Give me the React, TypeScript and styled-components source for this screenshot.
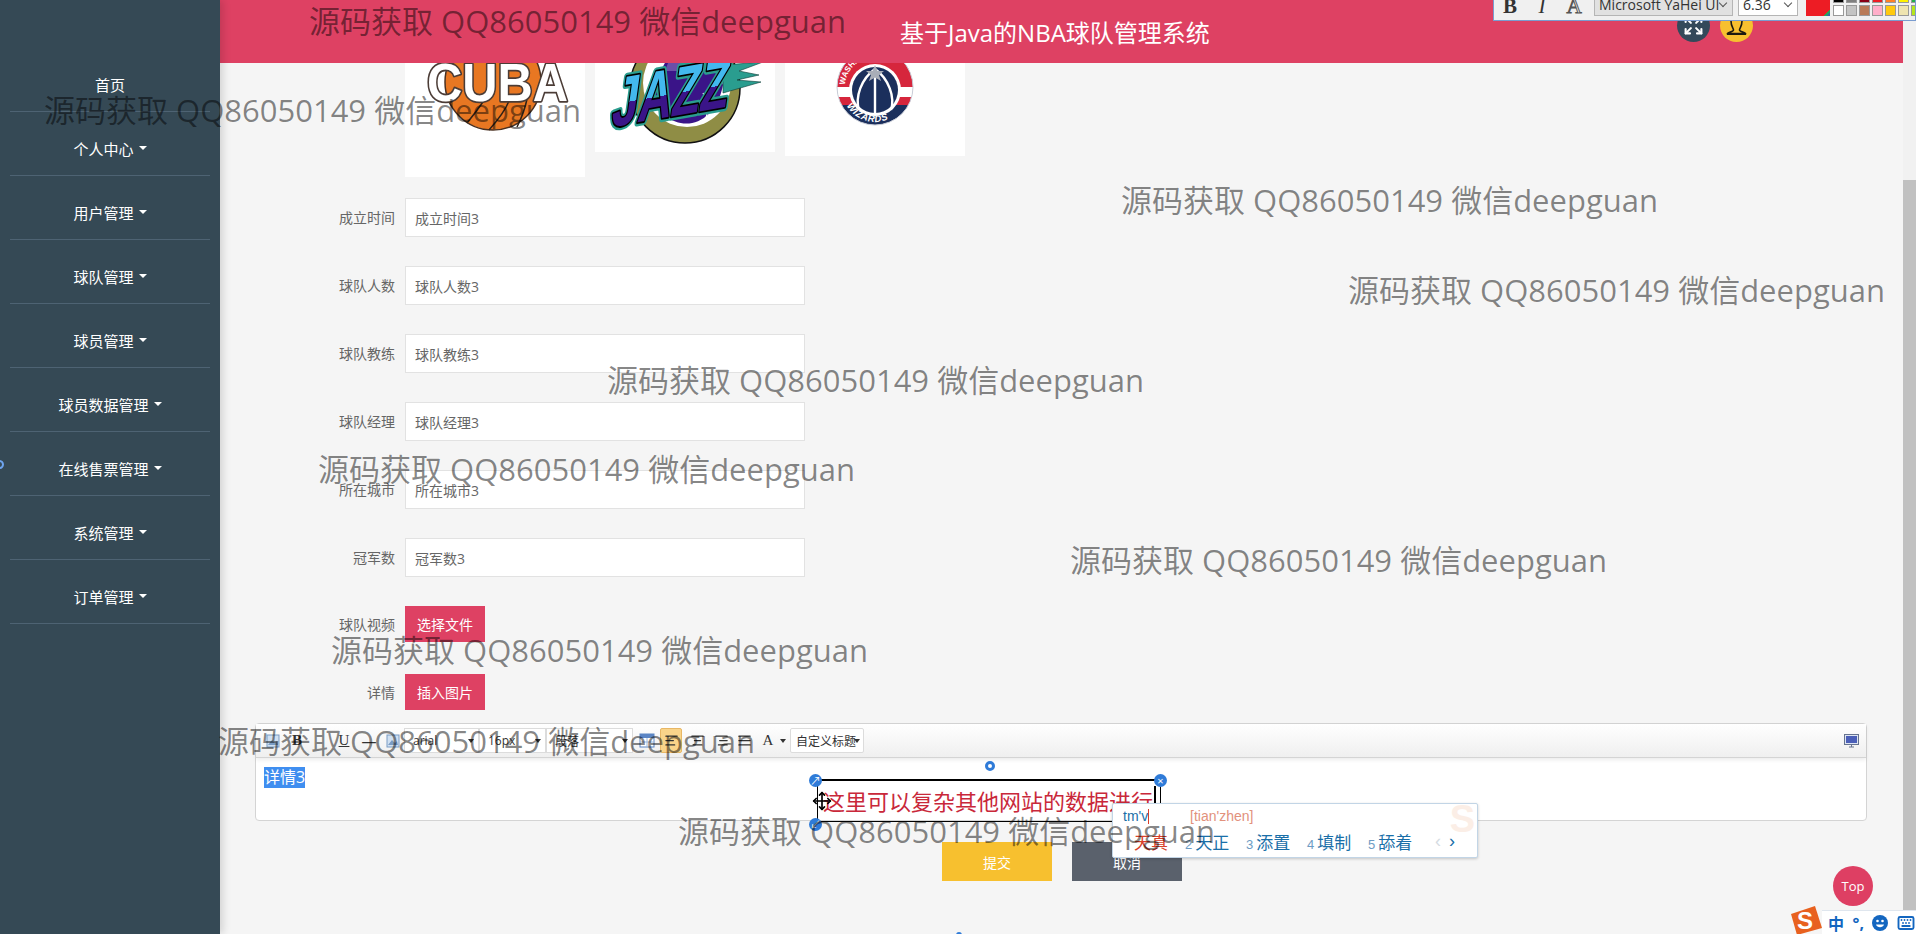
import styled, { createGlobalStyle } from "styled-components"
import { AlignCenter, AlignJustify, AlignLeft, AlignRight, Expand, Keyboard, Move } from "lucide-react"

const menuItems = ["个人中心", "用户管理", "球队管理", "球员管理", "球员数据管理", "在线售票管理", "系统管理", "订单管理"]
const fields = [
    { label: "成立时间", value: "成立时间3" },
    { label: "球队人数", value: "球队人数3" },
    { label: "球队教练", value: "球队教练3" },
    { label: "球队经理", value: "球队经理3" },
    { label: "所在城市", value: "所在城市3" },
    { label: "冠军数", value: "冠军数3" },
]
const watermarks = [
    [309, 21], [44, 110], [1121, 200], [1348, 290], [607, 380],
    [318, 469], [1070, 560], [331, 650], [218, 741], [678, 831],
]
const candidates = [
    { num: "2", word: "天正", width: 61 },
    { num: "3", word: "添置", width: 61 },
    { num: "4", word: "填制", width: 61 },
    { num: "5", word: "舔着", width: 67 },
]
const paletteTop = ["#000000", "#7f7f7f", "#880015", "#ed1c24", "#ff7f27", "#fff200", "#22b14c"]
const paletteBottom = ["#ffffff", "#c3c3c3", "#b97a57", "#ffaec9", "#ffc90e", "#efe4b0", "#b5e61d"]

export default function App() {
    return (
        <>
            <GlobalStyle />
            <Page>
                <Sidebar>
                    <MenuItem>首页</MenuItem>
                    {menuItems.map(item => (
                        <MenuItem key={item}>{item}<Caret /></MenuItem>
                    ))}
                    <SideDot />
                </Sidebar>
                <Main>
                    <Header>
                        <Title>基于Java的NBA球队管理系统</Title>
                        <HeaderIcons>
                            <RoundIcon $bg="#34495a" $color="#fff"><Expand size={21} strokeWidth={2.4} /></RoundIcon>
                            <RoundIcon $bg="#f7c02f" $color="#222"><BustIcon /></RoundIcon>
                        </HeaderIcons>
                    </Header>
                    <Content>
                        <LogoRow>
                            <LogoCard $height={114}><CubaLogo /></LogoCard>
                            <LogoCard $height={89}><JazzLogo /></LogoCard>
                            <LogoCard $height={93}><WizardsLogo /></LogoCard>
                        </LogoRow>
                        {fields.map(f => (
                            <FormRow key={f.label}>
                                <Label>{f.label}</Label>
                                <Input>{f.value}</Input>
                            </FormRow>
                        ))}
                        <UploadRow $gap={32}>
                            <UploadLabel>球队视频</UploadLabel>
                            <UploadButton>选择文件</UploadButton>
                        </UploadRow>
                        <UploadRow $gap={13}>
                            <UploadLabel>详情</UploadLabel>
                            <UploadButton>插入图片</UploadButton>
                        </UploadRow>
                        <Editor>
                            <EditorToolbar>
                                <ToolGlyph $width={24}><ImageGlyph /></ToolGlyph>
                                <ToolGlyph $width={24} $bold $serif>B</ToolGlyph>
                                <ToolGlyph $width={23} />
                                <ToolGlyph $width={24} $underline $serif>U</ToolGlyph>
                                <ToolGlyph $width={26}>—</ToolGlyph>
                                <ToolGlyph $width={22}><ImageGlyph /></ToolGlyph>
                                <ToolSelect $width={75}>arial</ToolSelect>
                                <ToolSelect $width={67}>16px</ToolSelect>
                                <ToolSelect $width={87}>段落</ToolSelect>
                                <ToolGlyph $width={27}><TableGlyph /></ToolGlyph>
                                <ActiveTool><AlignLeft size={15} /></ActiveTool>
                                <ToolGlyph $width={26}><AlignCenter size={15} /></ToolGlyph>
                                <ToolGlyph $width={22}><AlignRight size={15} /></ToolGlyph>
                                <ToolGlyph $width={24}><AlignJustify size={15} /></ToolGlyph>
                                <ToolGlyph $width={24} $serif>A</ToolGlyph>
                                <TinyCaret />
                                <TitleSelect>自定义标题</TitleSelect>
                                <MonitorIcon />
                            </EditorToolbar>
                            <EditorBody><Selected>详情3</Selected></EditorBody>
                        </Editor>
                        <Actions>
                            <ActionButton $bg="#f7c02f">提交</ActionButton>
                            <ActionButton $bg="#5a616c">取消</ActionButton>
                        </Actions>
                    </Content>
                </Main>
                <Scrollbar><Thumb /></Scrollbar>

                <FloatBar>
                    <FloatGlyph $bold>B</FloatGlyph>
                    <FloatGlyph $italic>I</FloatGlyph>
                    <FloatGlyph $outline>A</FloatGlyph>
                    <FloatSelect $width={139} $bg="#e1e1e1">Microsoft YaHei UI<Chevron /></FloatSelect>
                    <FloatSelect $width={60} $bg="#fff">6.36<Chevron /></FloatSelect>
                    <Swatch />
                    <Palette>
                        {paletteTop.map(c => <PaletteCell key={c} $color={c} $cut />)}
                        {paletteBottom.map(c => <PaletteCell key={c} $color={c} />)}
                    </Palette>
                </FloatBar>

                <TextBox>
                    <RedText>这里可以复杂其他网站的数据进行</RedText>
                    <BoxCaret />
                    <Handle $left={-9} $top={-7}>↗</Handle>
                    <Handle $left={336} $top={-7}>×</Handle>
                    <Handle $left={-9} $top={37}>↙</Handle>
                    <RotateHandle />
                    <MoveCursor><Move size={20} /></MoveCursor>
                </TextBox>

                <ImePopup>
                    <ImeSogou>S</ImeSogou>
                    <ImeTop>
                        <ImeInput>tm'v<ImeCursor /></ImeInput>
                        <ImePinyin>[tian'zhen]</ImePinyin>
                    </ImeTop>
                    <ImeRow>
                        <ImeFirst>天真</ImeFirst>
                        {candidates.map(c => (
                            <ImeCandidate key={c.num} $width={c.width}>
                                <ImeNum>{c.num}</ImeNum>{c.word}
                            </ImeCandidate>
                        ))}
                        <ImeArrow $dim>‹</ImeArrow>
                        <ImeArrow>›</ImeArrow>
                    </ImeRow>
                </ImePopup>

                <TopButton>Top</TopButton>
                <ImeBar>
                    <SogouLogo />
                    <ImeBarItem>
                        <strong>中</strong>
                        <strong>°,</strong>
                        <SmileIcon />
                        <Keyboard size={18} strokeWidth={2.5} />
                    </ImeBarItem>
                </ImeBar>
                <BottomDot />

                {watermarks.map(([x, y]) => (
                    <Watermark key={x} $x={x} $y={y}>源码获取 QQ86050149 微信deepguan</Watermark>
                ))}
            </Page>
        </>
    )
}

function BustIcon() {
    return (
        <svg width="33" height="33" viewBox="0 0 33 33" fill="none" stroke="#1d1a10" strokeWidth="1.6">
            <path d="M11 12 C11 18 13.5 19 13.5 21 C13.5 23 8 23 7.5 24.5 H25.5 C25 23 19.5 23 19.5 21 C19.5 19 22 18 22 12" />
            <path d="M7 25 H26" strokeWidth="2" />
        </svg>
    )
}

function SmileIcon() {
    return (
        <svg width="16" height="16" viewBox="0 0 16 16">
            <circle cx="8" cy="8" r="8" fill="#1366c0" />
            <circle cx="5.5" cy="6" r="1.3" fill="#fff" />
            <circle cx="10.5" cy="6" r="1.3" fill="#fff" />
            <path d="M4 9.5 C5 13 11 13 12 9.5 Z" fill="#fff" />
        </svg>
    )
}

function CubaLogo() {
    return (
        <svg width="180" height="114" viewBox="0 0 180 114">
            <circle cx="88" cy="19" r="48" fill="#e87722" stroke="#4a3020" strokeWidth="1.5" />
            <path d="M62 60 C72 48 76 42 80 36 M112 64 C118 52 120 46 122 36 M84 67 C92 58 100 48 104 38" fill="none" stroke="#2f2218" strokeWidth="1.5" />
            <text x="22" y="38" fontFamily="Liberation Sans" fontWeight="700" fontSize="54" fill="#fff" stroke="#4b3c36" strokeWidth="3.5" strokeLinejoin="round" paintOrder="stroke" textLength="141" lengthAdjust="spacingAndGlyphs">CUBA</text>
        </svg>
    )
}

function JazzLogo() {
    return (
        <svg width="180" height="89" viewBox="0 0 180 89">
            <defs>
                <linearGradient id="jazzFill" x1="0" y1="0" x2="0" y2="1">
                    <stop offset="0.52" stopColor="#43b8ee" />
                    <stop offset="0.52" stopColor="#3a1488" />
                </linearGradient>
            </defs>
            <circle cx="90" cy="25" r="55" fill="#8f8d45" stroke="#111" strokeWidth="1.5" />
            <circle cx="92" cy="20" r="44" fill="#fff" />
            <path d="M54 30 C70 72 118 72 128 22 L120 -4 L72 -4 Z" fill="#3a1488" />
            <path d="M76 -8 L88 -2 L98 -6 L110 0 L112 8 L70 8 Z" fill="#6b4fa8" />
            <path d="M66 54 C86 44 108 60 122 36 M108 30 C114 42 114 52 108 60" fill="none" stroke="#fff" strokeWidth="1.2" />
            <path d="M128 2 L168 -1 L144 8 L164 12 L142 17 L166 19 L128 30 Z" fill="#2a9d8f" stroke="#0b3a36" strokeWidth="0.6" />
            <g transform="rotate(-10 60 40) skewX(-18)">
                <text x="30" y="56" fontFamily="Liberation Sans" fontWeight="700" fontSize="68" fill="url(#jazzFill)" stroke="#2a9d8f" strokeWidth="8" strokeLinejoin="round" paintOrder="stroke" textLength="118" lengthAdjust="spacingAndGlyphs">JAZZ</text>
                <text x="30" y="56" fontFamily="Liberation Sans" fontWeight="700" fontSize="68" fill="url(#jazzFill)" stroke="#000" strokeWidth="3.5" strokeLinejoin="round" paintOrder="stroke" textLength="118" lengthAdjust="spacingAndGlyphs">JAZZ</text>
            </g>
        </svg>
    )
}

function WizardsLogo() {
    return (
        <svg width="180" height="93" viewBox="0 0 180 93">
            <defs>
                <clipPath id="wizardsDisc"><circle cx="90" cy="24" r="38" /></clipPath>
                <path id="wizardsLow" d="M58 34 A33 33 0 0 0 122 34" />
                <path id="wizardsTop" d="M60 24 A30 30 0 0 1 120 24" />
            </defs>
            <g clipPath="url(#wizardsDisc)">
                <rect x="50" y="-16" width="80" height="40" fill="#d6263c" />
                <rect x="50" y="24" width="80" height="10" fill="#fff" />
                <rect x="50" y="34" width="80" height="8" fill="#d6263c" />
                <rect x="50" y="42" width="80" height="22" fill="#1b2f5c" />
            </g>
            <circle cx="90" cy="24" r="38" fill="none" stroke="#c8ccd6" strokeWidth="1" />
            <circle cx="90" cy="27" r="26" fill="#fff" />
            <circle cx="90" cy="27" r="23" fill="#1b2f5c" />
            <path d="M90 6 C76 16 70 34 74 47 M90 6 C104 16 110 34 106 47 M90 10 V50" fill="none" stroke="#fff" strokeWidth="2.4" />
            <path d="M90 2 L92.5 8 L99 8 L94 12 L96 18 L90 14.5 L84 18 L86 12 L81 8 L87.5 8 Z" fill="#a9aeb8" />
            <text fontFamily="Liberation Sans" fontWeight="700" fontSize="8" fill="#fff">
                <textPath href="#wizardsTop" startOffset="2%">WASHINGTON</textPath>
            </text>
            <text fontFamily="Liberation Sans" fontStyle="italic" fontWeight="700" fontSize="9.5" fill="#fff" letterSpacing="0.5">
                <textPath href="#wizardsLow" startOffset="11%">WIZARDS</textPath>
            </text>
        </svg>
    )
}

function ImageGlyph() {
    return (
        <svg width="14" height="14" viewBox="0 0 14 14">
            <rect x="1" y="1" width="12" height="12" fill="#cfe0f2" stroke="#7a9cc4" />
            <path d="M2 11 L6 6 L9 9 L11 7 L12 11 Z" fill="#7a9cc4" />
        </svg>
    )
}

function TableGlyph() {
    return (
        <svg width="16" height="15" viewBox="0 0 16 15">
            <rect x="1" y="1" width="14" height="13" fill="#fff" stroke="#5b85c4" />
            <rect x="1" y="1" width="14" height="4" fill="#5b85c4" />
            <path d="M1 9 H15 M8 5 V14" stroke="#9db7de" />
        </svg>
    )
}

function MonitorIcon() {
    return (
        <MonitorWrap width="15" height="14" viewBox="0 0 15 14">
            <rect x="0.5" y="0.5" width="14" height="10" fill="#dfe6f2" stroke="#67748f" />
            <rect x="2" y="2" width="11" height="7" fill="#4b5fb8" />
            <path d="M5 13 H10 M7.5 11 V13" stroke="#67748f" />
        </MonitorWrap>
    )
}

function SogouLogo() {
    return (
        <SogouSvg width="34" height="30" viewBox="0 0 34 30">
            <path d="M2 8 L26 0 L33 22 L8 29 Z" fill="#e8611f" />
            <text x="8" y="23" fontFamily="Liberation Sans" fontWeight="700" fontSize="24" fill="#fff">S</text>
        </SogouSvg>
    )
}

const GlobalStyle = createGlobalStyle`
    html, body {
        margin: 0;
        height: 100%;
        overflow: hidden;
        background: #f5f5f5;
    }
    * {
        box-sizing: border-box;
    }
`

const Page = styled.div`
    position: relative;
    display: flex;
    width: 1916px;
    height: 934px;
    overflow: hidden;
    font-family: "Open Sans", "Noto Sans CJK SC", sans-serif;
`

const Sidebar = styled.nav`
    position: relative;
    z-index: 2;
    flex: 0 0 220px;
    padding: 48px 10px 0;
    background: #354955;
    box-shadow: 3px 0 8px rgba(0, 0, 0, 0.14);
`

const MenuItem = styled.div`
    height: 64px;
    padding-top: 9px;
    display: flex;
    align-items: center;
    justify-content: center;
    border-bottom: 1px solid #4e6373;
    color: #fff;
    font-size: 15px;
`

const Caret = styled.span`
    margin-left: 5px;
    border-top: 4px solid #fff;
    border-left: 4px solid transparent;
    border-right: 4px solid transparent;
`

const SideDot = styled.span`
    position: absolute;
    left: -5px;
    top: 460px;
    width: 9px;
    height: 9px;
    border: 2px solid #6ea4ef;
    border-radius: 50%;
`

const Main = styled.div`
    flex: 1;
    min-width: 0;
    display: flex;
    flex-direction: column;
`

const Header = styled.header`
    flex: 0 0 63px;
    display: flex;
    align-items: center;
    padding: 0 150px 0 680px;
    background: #de4163;
`

const Title = styled.h1`
    margin: 0;
    font-size: 24px;
    font-weight: 400;
    color: #fff;
    white-space: nowrap;
`

const HeaderIcons = styled.div`
    margin-left: auto;
    margin-bottom: 12px;
    display: flex;
    gap: 10px;
`

const RoundIcon = styled.span<{ $bg: string; $color: string }>`
    width: 33px;
    height: 33px;
    display: flex;
    align-items: center;
    justify-content: center;
    border-radius: 50%;
    background: ${props => props.$bg};
    color: ${props => props.$color};
`

const Content = styled.main`
    flex: 1;
`

const LogoRow = styled.div`
    display: flex;
    align-items: flex-start;
    gap: 10px;
    margin: 0 0 21px 185px;
`

const LogoCard = styled.div<{ $height: number }>`
    width: 180px;
    height: ${props => props.$height}px;
    overflow: hidden;
    background: #fff;
`

const FormRow = styled.div`
    display: flex;
    align-items: center;
    gap: 10px;
    margin-bottom: 29px;
`

const UploadRow = styled.div<{ $gap: number }>`
    display: flex;
    align-items: flex-end;
    gap: 10px;
    margin-bottom: ${props => props.$gap}px;
`

const Label = styled.label`
    width: 175px;
    text-align: right;
    color: #666;
    font-size: 14px;
    line-height: 26px;
`

const UploadLabel = styled(Label)`
    margin-bottom: 4px;
`

const Input = styled.div`
    width: 400px;
    height: 39px;
    padding: 0 9px;
    display: flex;
    align-items: center;
    background: #fff;
    border: 1px solid #e2e2e2;
    color: #666;
    font-size: 14px;
`

const UploadButton = styled.button`
    width: 80px;
    height: 36px;
    padding: 0;
    border: none;
    background: #de4163;
    color: #fff;
    font: inherit;
    font-size: 14px;
`

const Editor = styled.div`
    width: 1612px;
    margin-left: 35px;
    border: 1px solid #d4d4d4;
    border-radius: 4px;
    background: #fff;
`

const EditorToolbar = styled.div`
    height: 34px;
    display: flex;
    align-items: center;
    padding-left: 5px;
    background: linear-gradient(#ffffff, #efefef);
    border-bottom: 1px solid #d4d4d4;
    box-shadow: 0 2px 4px rgba(0, 0, 0, 0.08);
`

const ToolGlyph = styled.span<{ $width: number; $bold?: boolean; $serif?: boolean; $underline?: boolean }>`
    flex: 0 0 ${props => props.$width}px;
    display: flex;
    justify-content: center;
    color: #333;
    font-size: 15px;
    font-family: ${props => (props.$serif ? '"Liberation Serif", serif' : "inherit")};
    font-weight: ${props => (props.$bold ? 700 : 400)};
    text-decoration: ${props => (props.$underline ? "underline" : "none")};
`

const ToolSelect = styled.span<{ $width: number }>`
    position: relative;
    flex: 0 0 ${props => props.$width}px;
    height: 25px;
    padding-left: 8px;
    display: flex;
    align-items: center;
    background: #fff;
    border: 1px solid #dcdcdc;
    font-size: 12px;
    color: #333;

    &::after {
        content: "";
        position: absolute;
        right: 4px;
        top: 10px;
        border-top: 4px solid #333;
        border-left: 3px solid transparent;
        border-right: 3px solid transparent;
    }
`

const ActiveTool = styled.span`
    flex: 0 0 22px;
    height: 25px;
    margin-right: 2px;
    display: flex;
    align-items: center;
    justify-content: center;
    background: #f9d48a;
    border: 1px solid #e8b765;
    border-radius: 2px;
    color: #333;
`

const TinyCaret = styled.span`
    margin-right: 4px;
    border-top: 4px solid #333;
    border-left: 3px solid transparent;
    border-right: 3px solid transparent;
`

const TitleSelect = styled.span`
    position: relative;
    width: 74px;
    height: 25px;
    padding-left: 5px;
    display: flex;
    align-items: center;
    background: #fff;
    border: 1px solid #dcdcdc;
    border-radius: 2px;
    font-size: 12px;
    color: #333;
    white-space: nowrap;
    overflow: hidden;

    &::after {
        content: "";
        position: absolute;
        right: 3px;
        top: 10px;
        border-top: 4px solid #333;
        border-left: 3px solid transparent;
        border-right: 3px solid transparent;
    }
`

const MonitorWrap = styled.svg`
    margin-left: auto;
    margin-right: 7px;
`

const EditorBody = styled.div`
    height: 62px;
    padding: 8px 8px 0;
    font-size: 16px;
    color: #333;
`

const Selected = styled.span`
    display: inline-block;
    height: 21px;
    line-height: 21px;
    background: #3f8ef0;
    color: #fff;
`

const Actions = styled.div`
    display: flex;
    gap: 20px;
    margin: 21px 0 0 722px;
`

const ActionButton = styled.button<{ $bg: string }>`
    width: 110px;
    height: 39px;
    padding: 0;
    border: none;
    background: ${props => props.$bg};
    color: #fff;
    font: inherit;
    font-size: 14px;
`

const Scrollbar = styled.div`
    flex: 0 0 13px;
    padding-top: 180px;
    background: #f1f1f1;
`

const Thumb = styled.div`
    height: 100%;
    background: #c1c1c1;
`

const FloatBar = styled.div`
    position: absolute;
    z-index: 5;
    top: 0;
    right: 0;
    width: 423px;
    height: 21px;
    padding: 0 0 5px 0;
    display: flex;
    align-items: flex-end;
    overflow: hidden;
    background: #f0f0f0;
    border: 1px solid #7a9cd0;
    border-top: none;
`

const FloatGlyph = styled.span<{ $bold?: boolean; $italic?: boolean; $outline?: boolean }>`
    flex: 0 0 32px;
    margin-right: ${props => (props.$outline ? 4 : 0)}px;
    text-align: center;
    font-family: "Liberation Serif", serif;
    font-size: 21px;
    line-height: 18px;
    color: ${props => (props.$outline ? "transparent" : "#333")};
    font-weight: ${props => (props.$bold ? 700 : 400)};
    font-style: ${props => (props.$italic ? "italic" : "normal")};
    -webkit-text-stroke: ${props => (props.$outline ? "1px #555" : "0")};
`

const FloatSelect = styled.span<{ $width: number; $bg: string }>`
    flex: 0 0 ${props => props.$width}px;
    height: 24px;
    margin: -10px 5px -1px 0;
    padding: 0 4px;
    display: flex;
    align-items: center;
    justify-content: space-between;
    background: ${props => props.$bg};
    border: 1px solid #b5b5b5;
    font-family: "Open Sans", sans-serif;
    font-size: 14px;
    color: #333;
    white-space: nowrap;
`

const Chevron = styled.span`
    width: 6px;
    height: 6px;
    margin: -3px 2px 0 0;
    border-right: 1px solid #555;
    border-bottom: 1px solid #555;
    transform: rotate(45deg);
`

const Swatch = styled.span`
    flex: 0 0 24px;
    height: 16px;
    margin: 0 3px -1px 3px;
    background: linear-gradient(135deg, #ed1c24 85%, #22b14c 85%, #3f48cc);
`

const Palette = styled.div`
    display: grid;
    grid-template-columns: repeat(7, 11px);
    grid-template-rows: 3px 11px;
    gap: 2px;
    margin-bottom: -1px;
`

const PaletteCell = styled.span<{ $color: string; $cut?: boolean }>`
    background: ${props => props.$color};
    border: 1px solid #999;
    border-top-width: ${props => (props.$cut ? 0 : 1)}px;
`

const TextBox = styled.div`
    position: absolute;
    z-index: 3;
    left: 817px;
    top: 779px;
    width: 344px;
    height: 43px;
    display: flex;
    align-items: center;
    border: 1px solid #000;
    border-top-width: 2px;
`

const RedText = styled.span`
    margin-left: 5px;
    font-size: 22px;
    line-height: 1;
    color: #c9283a;
    white-space: nowrap;
`

const BoxCaret = styled.span`
    position: absolute;
    left: 336px;
    top: 5px;
    width: 2px;
    height: 18px;
    background: #000;
`

const Handle = styled.span<{ $left: number; $top: number }>`
    position: absolute;
    left: ${props => props.$left}px;
    top: ${props => props.$top}px;
    width: 13px;
    height: 13px;
    display: flex;
    align-items: center;
    justify-content: center;
    border-radius: 50%;
    background: #2f7bd8;
    color: #fff;
    font-size: 11px;
    line-height: 1;
`

const RotateHandle = styled.span`
    position: absolute;
    left: 167px;
    top: -20px;
    width: 10px;
    height: 10px;
    border: 3px solid #2f7bd8;
    border-radius: 50%;
    background: #fff;
`

const MoveCursor = styled.span`
    position: absolute;
    left: -6px;
    top: 10px;
    display: flex;
    color: #000;
`

const ImePopup = styled.div`
    position: absolute;
    z-index: 4;
    left: 1112px;
    top: 803px;
    width: 366px;
    height: 55px;
    overflow: hidden;
    background: #fff;
    border: 1px solid #c2d5e6;
    border-radius: 2px;
    box-shadow: 0 1px 3px rgba(0, 0, 0, 0.2);
    font-family: "Liberation Sans", "Noto Sans CJK SC", sans-serif;
`

const ImeSogou = styled.span`
    position: absolute;
    right: 2px;
    top: -6px;
    color: #fbeee6;
    font-size: 38px;
    font-weight: 700;
`

const ImeTop = styled.div`
    height: 24px;
    display: flex;
    align-items: center;
    padding-left: 10px;
    font-size: 14px;
`

const ImeInput = styled.span`
    width: 67px;
    display: flex;
    align-items: center;
    color: #1a6fa8;
`

const ImeCursor = styled.span`
    width: 1px;
    height: 15px;
    background: #d8402a;
`

const ImePinyin = styled.span`
    color: #e2917c;
`

const ImeRow = styled.div`
    height: 26px;
    padding-left: 21px;
    display: flex;
    align-items: center;
    font-size: 17px;
    color: #1a6fa8;
`

const ImeFirst = styled.span`
    width: 51px;
    color: #d8402a;
`

const ImeCandidate = styled.span<{ $width: number }>`
    width: ${props => props.$width}px;
    flex: none;
    white-space: nowrap;
`

const ImeNum = styled.span`
    margin-right: 3px;
    font-size: 13px;
    color: #6d9cc4;
`

const ImeArrow = styled.span<{ $dim?: boolean }>`
    width: 14px;
    font-size: 18px;
    color: ${props => (props.$dim ? "#d5dce3" : "#1a6fa8")};
`

const TopButton = styled.button`
    position: absolute;
    z-index: 3;
    left: 1833px;
    top: 866px;
    width: 40px;
    height: 40px;
    padding: 0;
    border: none;
    border-radius: 50%;
    background: #de3f63;
    color: #fff;
    font-family: "Open Sans", sans-serif;
    font-size: 13px;
`

const ImeBar = styled.div`
    position: absolute;
    z-index: 4;
    right: 0;
    bottom: 0;
    width: 94px;
    height: 24px;
    display: flex;
    align-items: center;
    background: #fff;
    border-top: 1px solid #dfe6ee;
`

const SogouSvg = styled.svg`
    position: absolute;
    left: -33px;
    bottom: -2px;
`

const ImeBarItem = styled.div`
    width: 100%;
    padding: 0 1px 0 6px;
    display: flex;
    align-items: center;
    justify-content: space-between;
    color: #1366c0;
    font-size: 16px;
`

const BottomDot = styled.span`
    position: absolute;
    z-index: 3;
    left: 956px;
    top: 932px;
    width: 6px;
    height: 6px;
    border-radius: 50%;
    background: #2f7bd8;
`

const Watermark = styled.div<{ $x: number; $y: number }>`
    position: absolute;
    z-index: 10;
    left: ${props => props.$x}px;
    top: ${props => props.$y - 21}px;
    font-size: 31px;
    line-height: 42px;
    color: rgba(0, 0, 0, 0.48);
    white-space: nowrap;
    pointer-events: none;
`
